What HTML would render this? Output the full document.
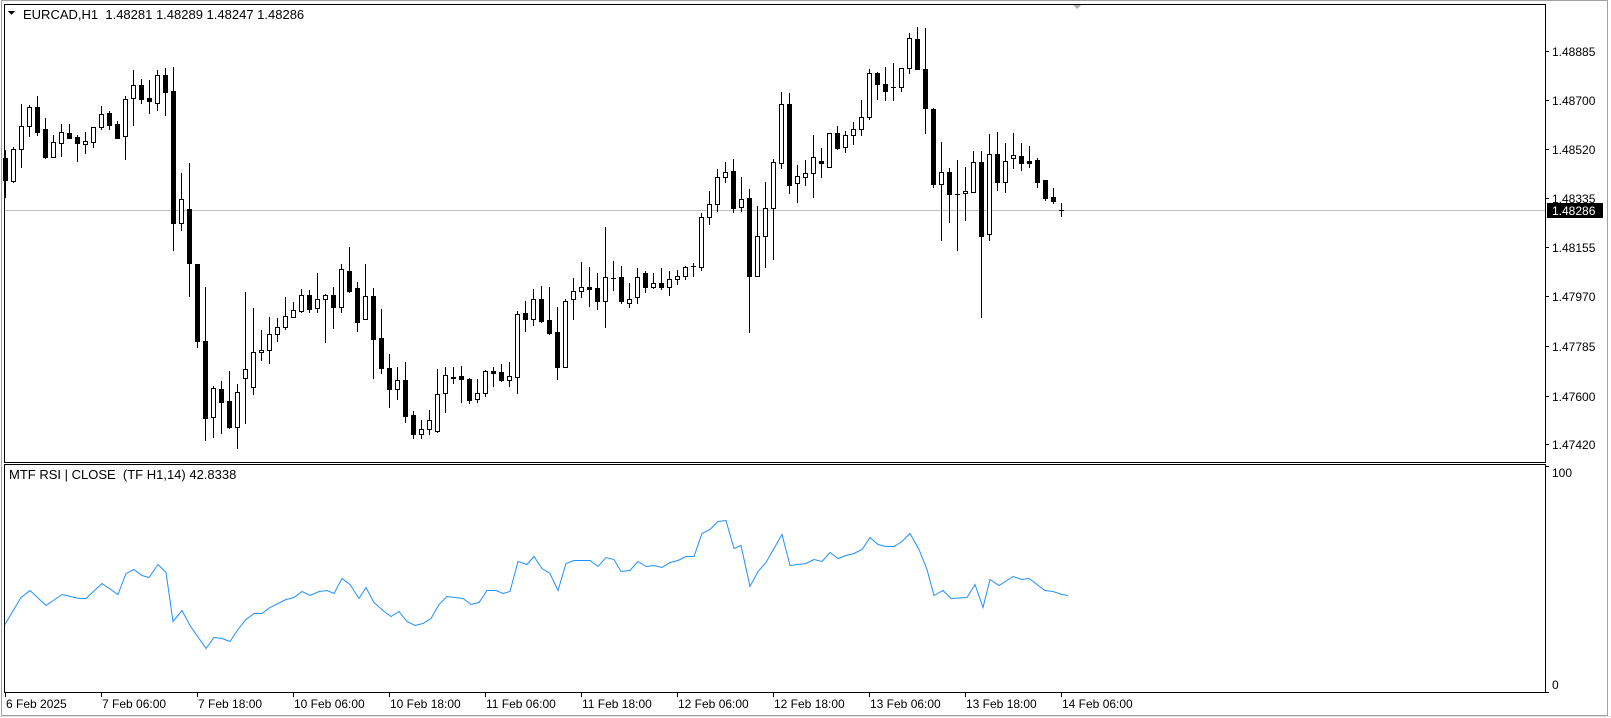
<!DOCTYPE html>
<html><head><meta charset="utf-8">
<style>
html,body{margin:0;padding:0;background:#fff;}
body{width:1611px;height:718px;overflow:hidden;position:relative;font-family:"Liberation Sans","DejaVu Sans",sans-serif;}
svg{position:absolute;left:0;top:0;}
text{white-space:pre;}
</style></head><body>
<svg id="s" width="1611" height="718" xmlns="http://www.w3.org/2000/svg" xml:space="preserve" font-family="Liberation Sans, DejaVu Sans, sans-serif" font-size="12" shape-rendering="crispEdges">
<rect x="0" y="0" width="1611" height="718" fill="#fff"/>
<rect x="1.5" y="0.5" width="1606" height="715" fill="none" stroke="#a0a0a0"/>
<line x1="0" y1="716.5" x2="1611" y2="716.5" stroke="#e0e0e0"/>
<rect x="4.5" y="4.5" width="1541" height="458" fill="none" stroke="#000"/>
<rect x="4.5" y="464.5" width="1541" height="228" fill="none" stroke="#000"/>
<polygon points="1073,5 1081,5 1077,9" fill="#b0b0b0"/>
<line x1="5" y1="210.5" x2="1545" y2="210.5" stroke="#c0c0c0"/>
<g id="candles"></g>
<polyline id="rsi" fill="none" stroke="#1e90ff" stroke-width="1" shape-rendering="auto" points=""/>
<polygon points="8,11 15,11 11.5,15" fill="#000"/>
<text x="23" y="19" font-size="13">EURCAD,H1  1.48281 1.48289 1.48247 1.48286</text>
<text x="9" y="479" font-size="13">MTF RSI | CLOSE  (TF H1,14) 42.8338</text>
<g id="axis"></g>
<rect x="1547" y="203" width="56" height="15" fill="#000"/>
<text x="1552" y="215" fill="#fff">1.48286</text>
<text x="1552" y="477">100</text>
<text x="1552" y="689">0</text>
<g id="time"></g>
</svg>
<script>
var D=[
[0,158,180,150,197],[1,149,181,147,182],[1,126,149,104,167],[1,107,126,105,136],[0,107,132,96,135],
[0,129,157,118,158],[1,142,157,135,157],[1,132,143,124,156],[0,133,138,124,138],[0,137,143,135,161],
[1,141,144,132,153],[1,127,142,127,147],[1,114,127,106,129],[0,113,125,111,129],[0,124,138,121,138],
[1,99,136,96,159],[1,85,98,70,125],[0,85,99,79,103],[0,98,101,80,113],[1,75,103,70,110],
[0,75,92,68,115],[0,91,223,67,250],[1,199,223,173,230],[0,209,263,163,296],[0,264,341,264,347],
[0,341,418,287,440],[1,388,417,386,437],[0,389,402,381,433],[0,401,427,371,428],[1,392,427,384,448],
[1,369,378,292,423],[1,352,387,308,394],[1,350,352,330,360],[1,334,350,317,363],[1,327,334,318,341],
[1,316,327,297,329],[1,310,317,302,317],[1,295,311,289,312],[0,295,309,290,312],[1,299,308,273,312],
[1,295,299,294,342],[0,295,307,287,328],[1,269,307,264,312],[0,271,291,247,292],[0,288,322,282,331],
[1,296,319,264,319],[0,296,339,288,378],[0,338,368,309,373],[0,368,389,354,407],[1,380,389,367,399],
[0,380,416,362,422],[0,415,434,411,438],[1,429,434,420,438],[1,420,429,410,434],[1,394,431,369,432],
[1,375,393,367,412],[1,377,378,367,383],[0,376,379,366,402],[0,379,400,378,403],[1,393,399,379,402],
[1,371,393,370,396],[0,371,373,367,386],[0,372,380,364,381],[1,376,380,362,386],[1,314,377,311,393],
[0,313,319,301,331],[1,299,319,289,325],[0,299,321,286,322],[0,320,333,287,334],[0,332,367,307,379],
[1,301,367,299,367],[1,291,299,278,319],[1,287,291,262,297],[0,287,289,267,306],[0,288,301,273,309],
[1,277,301,227,327],[1,278,278,261,290],[0,277,301,266,303],[1,299,303,283,307],[1,277,297,268,303],
[0,273,287,271,292],[1,283,287,273,288],[0,283,287,268,289],[1,279,287,271,295],[1,276,279,270,284],
[1,267,276,266,279],[1,266,266,263,276],[1,217,267,213,270],[1,204,217,191,224],[1,177,204,169,211],
[1,172,177,162,182],[0,171,208,159,212],[1,199,207,177,211],[0,198,276,189,332],[1,236,276,206,276],
[1,208,236,182,267],[1,162,208,159,259],[1,104,163,92,168],[0,104,185,93,193],[1,176,183,165,202],
[1,173,177,160,185],[1,157,173,135,197],[0,161,163,148,177],[1,133,167,133,167],[0,133,148,126,149],
[1,135,147,131,152],[1,129,135,122,144],[1,117,129,100,135],[1,73,117,69,119],[0,73,84,72,99],
[0,84,91,67,100],[1,87,87,63,100],[1,68,87,68,91],[1,38,68,33,73],[0,39,69,27,69],
[0,69,108,28,133],[0,109,184,108,187],[1,172,184,142,240],[0,172,194,168,222],[1,194,194,160,250],
[1,191,193,167,220],[1,162,192,151,192],[0,162,236,151,317],[1,154,234,134,240],[0,154,182,132,190],
[1,161,182,143,192],[1,155,158,133,168],[0,156,163,143,170],[0,161,163,146,167],[0,160,182,158,187],
[0,180,198,180,200],[0,197,201,188,203],[1,210,210,203,216]];
var NS="http://www.w3.org/2000/svg";
function el(n,a,p){var e=document.createElementNS(NS,n);for(var k in a)e.setAttribute(k,a[k]);p.appendChild(e);return e;}
var g=document.getElementById('candles');
for(var i=0;i<D.length;i++){var d=D[i],cx=5+8*i;
 el('rect',{x:cx,y:d[3],width:1,height:Math.max(1,d[4]-d[3]+1),fill:'#000'},g);
 var h=d[2]-d[1];
 if(h<2){el('rect',{x:cx-2,y:d[1],width:5,height:1+h,fill:'#000'},g);}
 else if(d[0]==0){el('rect',{x:cx-2,y:d[1],width:5,height:h+1,fill:'#000'},g);}
 else{el('rect',{x:cx-2,y:d[1],width:5,height:h+1,fill:'#000'},g);el('rect',{x:cx-1,y:d[1]+1,width:3,height:h-1,fill:'#fff'},g);}
}
var P=[[5,624],[21,597],[30,590],[46,605],[62,594],[79,598],[86,598],[102,583],[118,594],[126,573],[134,569],[142,575],[149,577],[158,564],[166,572],[173,621],[182,610],[190,625],[206,648],[214,637],[222,638],[230,641],[238,629],[246,619],[254,613],[262,613],[270,607],[286,599],[294,597],[302,591],[310,595],[319,591],[327,590],[334,593],[342,578],[350,584],[359,598],[366,587],[374,602],[383,610],[391,616],[399,611],[407,621],[415,625],[423,623],[431,618],[439,604],[447,596],[455,597],[463,598],[471,604],[479,602],[487,590],[496,590],[503,593],[510,591],[518,561],[527,564],[534,556],[542,568],[550,573],[558,590],[566,563],[574,560],[590,560],[598,566],[606,557],[614,559],[621,571],[630,570],[638,561],[646,566],[654,565],[662,567],[670,562],[678,560],[686,556],[694,556],[702,533],[710,529],[718,521],[726,520],[734,548],[741,545],[750,586],[758,571],[766,562],[782,534],[790,565],[806,563],[814,559],[822,561],[830,552],[838,558],[846,555],[854,553],[862,549],[870,537],[878,544],[886,546],[894,546],[902,541],[910,533],[919,549],[927,569],[934,595],[943,590],[951,598],[967,597],[975,584],[983,607],[990,579],[999,585],[1013,576],[1022,579],[1029,578],[1037,584],[1045,590],[1053,591],[1062,594],[1068,595]];
document.getElementById('rsi').setAttribute('points',P.map(function(p){return p[0]+','+(p[1]+0.5)}).join(' '));
var ax=document.getElementById('axis');
var L=[["1.48885",50.7],["1.48700",100.4],["1.48520",149],["1.48335",198.4],["1.48155",246.7],["1.47970",296.4],["1.47785",346],["1.47600",395.7],["1.47420",444]];
L.forEach(function(l){var y=Math.round(l[1]);el('rect',{x:1546,y:y,width:3,height:1,fill:'#000'},ax);var t=el('text',{x:1552,y:y+5},ax);t.textContent=l[0];});
el('rect',{x:1546,y:466,width:3,height:1,fill:'#000'},ax);el('rect',{x:1546,y:692,width:3,height:1,fill:'#000'},ax);
var T=["6 Feb 2025","7 Feb 06:00","7 Feb 18:00","10 Feb 06:00","10 Feb 18:00","11 Feb 06:00","11 Feb 18:00","12 Feb 06:00","12 Feb 18:00","13 Feb 06:00","13 Feb 18:00","14 Feb 06:00"];
var tg=document.getElementById('time');
T.forEach(function(s,k){var x=5+96*k;el('rect',{x:x,y:693,width:1,height:4,fill:'#000'},tg);var t=el('text',{x:x+1,y:708},tg);t.textContent=s;});
</script>
</body></html>
